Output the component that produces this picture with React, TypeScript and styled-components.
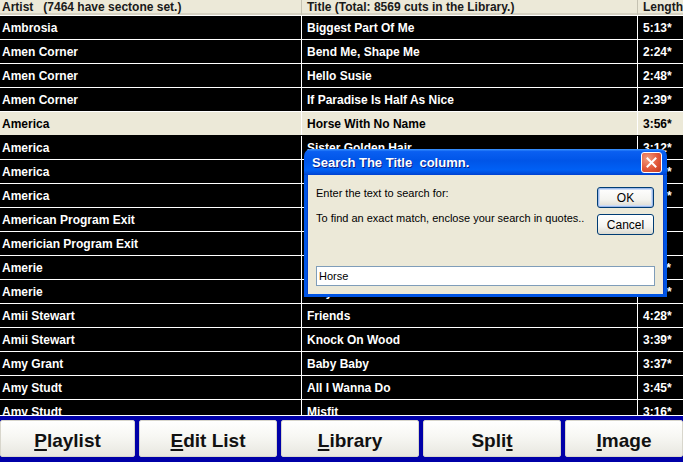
import React from 'react';
import styled, { createGlobalStyle } from 'styled-components';

const GlobalStyle = createGlobalStyle`
  html, body {
    margin: 0;
    padding: 0;
    background: #000;
    overflow: hidden;
  }
`;

interface Track {
  artist: string;
  title: string;
  length: string;
  selected?: boolean;
}

const tracks: Track[] = [
  { artist: 'Ambrosia', title: 'Biggest Part Of Me', length: '5:13*' },
  { artist: 'Amen Corner', title: 'Bend Me, Shape Me', length: '2:24*' },
  { artist: 'Amen Corner', title: 'Hello Susie', length: '2:48*' },
  { artist: 'Amen Corner', title: 'If Paradise Is Half As Nice', length: '2:39*' },
  { artist: 'America', title: 'Horse With No Name', length: '3:56*', selected: true },
  { artist: 'America', title: 'Sister Golden Hair', length: '3:12*' },
  { artist: 'America', title: 'Tin Man', length: '3:31*' },
  { artist: 'America', title: 'Ventura Highway', length: '3:32*' },
  { artist: 'American Program Exit', title: 'Tomorrow Never Comes', length: '3:45' },
  { artist: 'Americian Program Exit', title: 'Tomorrow Never Comes', length: '3:45' },
  { artist: 'Amerie', title: '1 Thing', length: '4:11*' },
  { artist: 'Amerie', title: 'Why Don\'t We Fall In Love', length: '3:29*' },
  { artist: 'Amii Stewart', title: 'Friends', length: '4:28*' },
  { artist: 'Amii Stewart', title: 'Knock On Wood', length: '3:39*' },
  { artist: 'Amy Grant', title: 'Baby Baby', length: '3:37*' },
  { artist: 'Amy Studt', title: 'All I Wanna Do', length: '3:45*' },
  { artist: 'Amy Studt', title: 'Misfit', length: '3:16*' },
];

const Screen = styled.div`
  position: relative;
  width: 683px;
  height: 462px;
  display: flex;
  flex-direction: column;
  overflow: hidden;
  background: #000;
  font-family: "Liberation Sans", Arial, sans-serif;
`;

const Grid = styled.div`
  flex: 1;
  min-height: 0;
  overflow: hidden;
`;

const RowBase = styled.div`
  display: grid;
  grid-template-columns: 302px 336px 1fr;
  box-sizing: border-box;
`;

const HeaderRow = styled(RowBase)`
  height: 16px;
  background: #ece9d8;
  border-bottom: 1px solid #fff;
  box-shadow: inset 0 -2px 0 #d6d2c2;
`;

const DataRow = styled(RowBase)<{ $selected?: boolean }>`
  height: 24px;
  background: ${({ $selected }) => ($selected ? '#ece9d8' : '#000')};
  color: ${({ $selected }) => ($selected ? '#000' : '#fff')};
  border-bottom: 1px solid ${({ $selected }) => ($selected ? '#000' : '#fff')};
`;

const Cell = styled.div<{ $first?: boolean; $last?: boolean }>`
  box-sizing: border-box;
  display: flex;
  align-items: center;
  padding-left: ${({ $first }) => ($first ? '2px' : '5px')};
  border-right: ${({ $last }) => ($last ? 'none' : '1px solid #fff')};
  font-size: 12px;
  font-weight: bold;
  white-space: nowrap;
  overflow: hidden;
`;

const HeadCell = styled(Cell)`
  color: #1a1a1a;
  border-right-color: #c5c2b2;
  line-height: 15px;
`;

const ButtonBar = styled.div`
  flex: none;
  display: grid;
  grid-template-columns: 135px 138px 138px 138px 1fr;
  gap: 4px;
  padding: 4px 0 5px;
  background: #0000a8;
  border-top: 1px solid #fff;
`;

const NavButton = styled.button`
  height: 37px;
  margin: 0;
  padding: 4px 0 0;
  border: 1px solid #d8d6cc;
  border-radius: 2px;
  background: linear-gradient(to bottom, #ffffff 0%, #f7f7f3 45%, #e8e7e0 100%);
  font-family: "Liberation Sans", Arial, sans-serif;
  font-size: 19px;
  font-weight: bold;
  color: #111;
  cursor: pointer;

  u {
    text-decoration-thickness: 2px;
    text-underline-offset: 2px;
  }
`;

const Dialog = styled.div`
  position: absolute;
  left: 304px;
  top: 149px;
  width: 363px;
  height: 148px;
  display: flex;
  flex-direction: column;
  box-sizing: border-box;
`;

const TitleBar = styled.div`
  height: 26px;
  flex: none;
  display: flex;
  align-items: center;
  justify-content: space-between;
  padding: 0 5px 0 8px;
  border-radius: 7px 7px 0 0;
  background: linear-gradient(
    to bottom,
    #3d95ff 0%,
    #0a5ff1 10%,
    #0055e8 45%,
    #0060f5 80%,
    #0050e0 92%,
    #0040d0 100%
  );
`;

const TitleText = styled.span`
  color: #fff;
  font-size: 13px;
  font-weight: bold;
  text-shadow: 1px 1px 0 #0a1e8a;
`;

const CloseButton = styled.button`
  width: 21px;
  height: 21px;
  padding: 0;
  display: flex;
  align-items: center;
  justify-content: center;
  border: 1px solid #fff;
  border-radius: 3px;
  background: radial-gradient(circle at 30% 30%, #f29c7e 0%, #e2583a 55%, #c13b1f 100%);
  cursor: pointer;
`;

const Body = styled.div`
  flex: 1;
  display: flex;
  flex-direction: column;
  justify-content: space-between;
  padding: 12px 10px 8px 9px;
  background: #ece9d8;
  border: 3px solid #0055e5;
  border-top: none;
  box-shadow: inset 1px 0 0 #0840c8, inset -1px 0 0 #0840c8;
`;

const TopSection = styled.div`
  display: flex;
  justify-content: space-between;
`;

const Messages = styled.div`
  display: flex;
  flex-direction: column;
  gap: 12px;
  font-size: 11px;
  color: #000;
  line-height: 13px;
`;

const DialogButtons = styled.div`
  display: flex;
  flex-direction: column;
  gap: 6px;
`;

const DialogButton = styled.button<{ $default?: boolean }>`
  width: 57px;
  height: 21px;
  padding: 0;
  border: 1px solid #003c74;
  border-radius: 3px;
  background: linear-gradient(to bottom, #ffffff 0%, #f4f4f0 60%, #dcdad0 100%);
  box-shadow: ${({ $default }) =>
    $default ? 'inset 0 0 0 1px #9cb9ea, inset 0 0 0 2px #cddcf5' : 'none'};
  font-family: "Liberation Sans", Arial, sans-serif;
  font-size: 12px;
  color: #000;
`;

const SearchInput = styled.input`
  box-sizing: border-box;
  width: 339px;
  height: 20px;
  padding: 0 2px;
  border: 1px solid #7f9db9;
  background: #fff;
  font-family: "Liberation Sans", Arial, sans-serif;
  font-size: 11px;
  color: #000;
  outline: none;
`;

const navItems: { before: string; key: string; after: string }[] = [
  { before: '', key: 'P', after: 'laylist' },
  { before: '', key: 'E', after: 'dit List' },
  { before: '', key: 'L', after: 'ibrary' },
  { before: 'Spli', key: 't', after: '' },
  { before: '', key: 'I', after: 'mage' },
];

export default function App() {
  return (
    <Screen>
      <GlobalStyle />
      <Grid>
        <HeaderRow>
          <HeadCell $first>Artist&nbsp;&nbsp;&nbsp;(7464 have sectone set.)</HeadCell>
          <HeadCell>Title (Total: 8569 cuts in the Library.)</HeadCell>
          <HeadCell $last>Length</HeadCell>
        </HeaderRow>
        {tracks.map((t, i) => (
          <DataRow key={i} $selected={t.selected}>
            <Cell $first>{t.artist}</Cell>
            <Cell>{t.title}</Cell>
            <Cell $last>{t.length}</Cell>
          </DataRow>
        ))}
      </Grid>

      <ButtonBar>
        {navItems.map((n) => (
          <NavButton key={n.key + n.after}>
            {n.before}
            <u>{n.key}</u>
            {n.after}
          </NavButton>
        ))}
      </ButtonBar>

      <Dialog>
        <TitleBar>
          <TitleText>Search The Title&nbsp; column.</TitleText>
          <CloseButton aria-label="Close">
            <svg width="11" height="11" viewBox="0 0 11 11">
              <path d="M1.5 1.5 L9.5 9.5 M9.5 1.5 L1.5 9.5" stroke="#fff" strokeWidth="2" strokeLinecap="square" />
            </svg>
          </CloseButton>
        </TitleBar>
        <Body>
          <TopSection>
            <Messages>
              <span>Enter the text to search for:</span>
              <span>To find an exact match, enclose your search in quotes..</span>
            </Messages>
            <DialogButtons>
              <DialogButton $default>OK</DialogButton>
              <DialogButton>Cancel</DialogButton>
            </DialogButtons>
          </TopSection>
          <SearchInput defaultValue="Horse" />
        </Body>
      </Dialog>
    </Screen>
  );
}
